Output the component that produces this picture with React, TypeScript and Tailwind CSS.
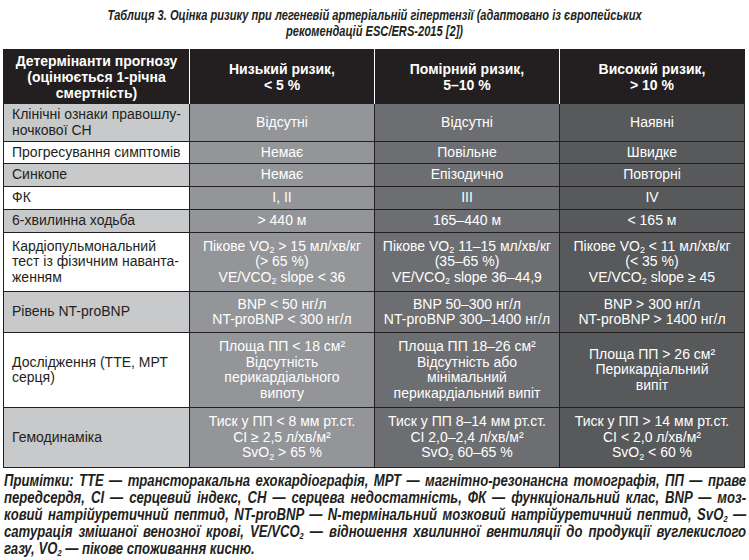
import type { ReactNode } from 'react';

const COLS = 'grid grid-cols-[185px_184px_184px_184px]';

type Row = {
  h: string;
  label: ReactNode;
  cells: ReactNode[];
};

const O2 = (
  <>
    O<sub className="text-[9px]">2</sub>
  </>
);

const ROWS: Row[] = [
  {
    h: 'h-[37px]',
    label: (
      <>
        Клінічні ознаки правошлу-
        <br />
        ночкової СН
      </>
    ),
    cells: ['Відсутні', 'Відсутні', 'Наявні'],
  },
  {
    h: 'h-[21px]',
    label: 'Прогресування симптомів',
    cells: ['Немає', 'Повільне', 'Швидке'],
  },
  { h: 'h-[22px]', label: 'Синкопе', cells: ['Немає', 'Епізодично', 'Повторні'] },
  { h: 'h-[22px]', label: 'ФК', cells: ['I, II', 'III', 'IV'] },
  {
    h: 'h-[22px]',
    label: '6-хвилинна ходьба',
    cells: ['> 440 м', '165–440 м', '< 165 м'],
  },
  {
    h: 'h-[58px]',
    label: (
      <>
        Кардіопульмональний
        <br />
        тест із фізичним наванта-
        <br />
        женням
      </>
    ),
    cells: [
      <>
        Пікове V{O2} &gt; 15 мл/хв/кг
        <br />
        (&gt; 65 %)
        <br />
        VE/VC{O2} slope &lt; 36
      </>,
      <>
        Пікове V{O2} 11–15 мл/хв/кг
        <br />
        (35–65 %)
        <br />
        VE/VC{O2} slope 36–44,9
      </>,
      <>
        Пікове V{O2} &lt; 11 мл/хв/кг
        <br />
        (&lt; 35 %)
        <br />
        VE/VC{O2} slope ≥ 45
      </>,
    ],
  },
  {
    h: 'h-[40px]',
    label: 'Рівень NT-proBNP',
    cells: [
      <>
        BNP &lt; 50 нг/л
        <br />
        NT-proBNP &lt; 300 нг/л
      </>,
      <>
        BNP 50–300 нг/л
        <br />
        NT-proBNP 300–1400 нг/л
      </>,
      <>
        BNP &gt; 300 нг/л
        <br />
        NT-proBNP &gt; 1400 нг/л
      </>,
    ],
  },
  {
    h: 'h-[74px]',
    label: (
      <>
        Дослідження (ТТЕ, МРТ
        <br />
        серця)
      </>
    ),
    cells: [
      <>
        Площа ПП &lt; 18 см²
        <br />
        Відсутність
        <br />
        перикардіального
        <br />
        випоту
      </>,
      <>
        Площа ПП 18–26 см²
        <br />
        Відсутність або
        <br />
        мінімальний
        <br />
        перикардіальний випіт
      </>,
      <>
        Площа ПП &gt; 26 см²
        <br />
        Перикардіальний
        <br />
        випіт
      </>,
    ],
  },
  {
    h: 'h-[59px]',
    label: 'Гемодинаміка',
    cells: [
      <>
        Тиск у ПП &lt; 8 мм рт.ст.
        <br />
        CI ≥ 2,5 л/хв/м²
        <br />
        Sv{O2} &gt; 65 %
      </>,
      <>
        Тиск у ПП 8–14 мм рт.ст.
        <br />
        CI 2,0–2,4 л/хв/м²
        <br />
        Sv{O2} 60–65 %
      </>,
      <>
        Тиск у ПП &gt; 14 мм рт.ст.
        <br />
        CI &lt; 2,0 л/хв/м²
        <br />
        Sv{O2} &lt; 60 %
      </>,
    ],
  },
];

const CELL_BG = ['bg-[#939598]', 'bg-[#6d6e71]', 'bg-[#58595b]'];

// notes are laid out wide and squeezed horizontally to imitate the condensed face
const NOTES: ReactNode[] = [
  'Примітки: ТТЕ — трансторакальна ехокардіографія, МРТ — магнітно-резонансна томографія, ПП — праве',
  'передсердя, CI — серцевий індекс, СН — серцева недостатність, ФК — функціональний клас, BNP — моз-',
  <>
    ковий натрійуретичний пептид, NT-proBNP — N-термінальний мозковий натрійуретичний пептид, Sv{O2} —
  </>,
  <>
    сатурація змішаної венозної крові, VE/VC{O2} — відношення хвилинної вентиляції до продукції вуглекислого
  </>,
];

export default function App() {
  return (
    <div className="w-[749px] h-[560px] overflow-hidden bg-white text-[#231f20] font-['Liberation_Sans',Arial,sans-serif]">
      {/* Title */}
      <div className="pt-[7px] text-center text-[15px] leading-[16px] font-bold italic scale-x-[0.74]">
        <p className="whitespace-nowrap">
          Таблиця 3. Оцінка ризику при легеневій артеріальній гіпертензії (адаптовано із європейських
        </p>
        <p>рекомендацій ESC/ERS-2015 [2])</p>
      </div>

      {/* Table */}
      <div className="mt-[10px] ml-[3px] w-[742px]">
        <div
          className={`${COLS} gap-x-px bg-white border-x border-[#231f20] h-[55px] text-white font-bold text-[14px] leading-[16px] text-center`}
        >
          <div className="bg-[#231f20] flex items-center justify-center">
            Детермінанти прогнозу
            <br />
            (оцінюється 1-річна
            <br />
            смертність)
          </div>
          <div className="bg-[#231f20] flex items-center justify-center">
            Низький ризик,
            <br />
            &lt; 5 %
          </div>
          <div className="bg-[#231f20] flex items-center justify-center">
            Помірний ризик,
            <br />
            5–10 %
          </div>
          <div className="bg-[#231f20] flex items-center justify-center">
            Високий ризик,
            <br />
            &gt; 10 %
          </div>
        </div>

        <div className="border-x border-b border-[#231f20] bg-[#231f20] flex flex-col gap-y-px text-[14px] leading-[15.5px]">
          {ROWS.map((row, i) => (
            <div key={i} className={`${COLS} gap-x-px ${row.h}`}>
              <div
                className={`flex items-center pl-[8px] ${
                  i % 2 === 0 ? 'bg-[#c8c9cb]' : 'bg-white'
                }`}
              >
                <div>{row.label}</div>
              </div>
              {row.cells.map((c, j) => (
                <div
                  key={j}
                  className={`flex items-center justify-center text-center text-white ${CELL_BG[j]}`}
                >
                  <div>{c}</div>
                </div>
              ))}
            </div>
          ))}
        </div>
      </div>

      {/* Notes */}
      <div className="mt-[4px] ml-[4px] w-[905px] origin-left scale-x-[0.82] text-[16px] leading-[17px] font-bold italic">
        {NOTES.map((n, i) => (
          <div key={i} className="text-justify [text-align-last:justify] whitespace-nowrap">
            {n}
          </div>
        ))}
        <div>газу, V{O2} — пікове споживання кисню.</div>
      </div>
    </div>
  );
}
